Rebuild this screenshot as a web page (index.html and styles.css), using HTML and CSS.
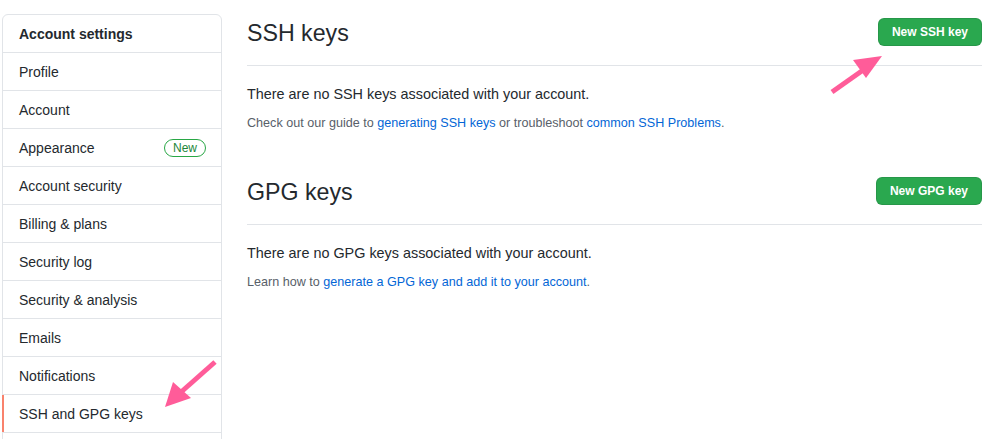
FILE: index.html
```html
<!DOCTYPE html>
<html>
<head>
<meta charset="utf-8">
<link rel="stylesheet" href="styles.css">
</head>
<body>
<div class="page">
  <nav class="menu">
    <div class="menu-heading">Account settings</div>
    <a class="menu-item">Profile</a>
    <a class="menu-item">Account</a>
    <a class="menu-item">Appearance <span class="badge">New</span></a>
    <a class="menu-item">Account security</a>
    <a class="menu-item">Billing &amp; plans</a>
    <a class="menu-item">Security log</a>
    <a class="menu-item">Security &amp; analysis</a>
    <a class="menu-item">Emails</a>
    <a class="menu-item">Notifications</a>
    <a class="menu-item selected">SSH and GPG keys</a>
    <div class="menu-rest"></div>
  </nav>
  <main class="content">
    <section class="block">
      <div class="subhead">
        <h2 class="subhead-title">SSH keys</h2>
        <button class="btn">New SSH key</button>
      </div>
      <p class="lead">There are no SSH keys associated with your account.</p>
      <p class="note">Check out our guide to <a class="link">generating SSH keys</a> or troubleshoot <a class="link">common SSH Problems</a>.</p>
    </section>
    <section class="block second">
      <div class="subhead">
        <h2 class="subhead-title">GPG keys</h2>
        <button class="btn">New GPG key</button>
      </div>
      <p class="lead">There are no GPG keys associated with your account.</p>
      <p class="note">Learn how to <a class="link">generate a GPG key and add it to your account</a>.</p>
    </section>
  </main>
</div>
<svg class="arrow arrow-top" width="60" height="40" viewBox="0 0 60 40">
  <line x1="2" y1="36" x2="36" y2="12" stroke="#ff5c99" stroke-width="5"/>
  <polygon points="52,0 23,4 36,22" fill="#ff5c99"/>
</svg>
<svg class="arrow arrow-bottom" width="60" height="52" viewBox="0 0 60 52">
  <line x1="55" y1="3" x2="20" y2="34" stroke="#ff5c99" stroke-width="5"/>
  <polygon points="5,48 13,23 31,39" fill="#ff5c99"/>
</svg>
</body>
</html>
```
FILE: styles.css
```css
html, body {
  margin: 0;
  padding: 0;
  background: #fff;
}
body {
  font-family: "Liberation Sans", Arial, sans-serif;
  color: #24292e;
  font-size: 14px;
  width: 987px;
  height: 439px;
  overflow: hidden;
  position: relative;
}
.page {
  display: flex;
  padding: 14px 5px 0 2px;
  gap: 25px;
}
.menu {
  width: 218px;
  flex: none;
  border: 1px solid #e1e4e8;
  border-radius: 6px;
  display: flex;
  flex-direction: column;
}
.menu-heading {
  height: 37px;
  padding: 0 16px;
  display: flex;
  align-items: center;
  font-weight: bold;
  border-bottom: 1px solid #e1e4e8;
}
.menu-item {
  height: 37px;
  padding: 0 15px 0 16px;
  display: flex;
  align-items: center;
  justify-content: space-between;
  border-bottom: 1px solid #e1e4e8;
  color: #24292e;
  position: relative;
}
.menu-rest {
  height: 20px;
}
.menu-item.selected::before {
  content: "";
  position: absolute;
  left: -1px;
  top: 0;
  bottom: 0;
  width: 2px;
  background: #f9826c;
}
.badge {
  display: inline-block;
  font-size: 12px;
  font-weight: 500;
  line-height: 16px;
  padding: 0 8px;
  border: 1px solid #28a745;
  border-radius: 2em;
  color: #22863a;
}
.content {
  flex: 1;
}
.block.second {
  margin-top: 41px;
}
.subhead {
  display: flex;
  align-items: flex-start;
  justify-content: space-between;
  height: 51px;
  border-bottom: 1px solid #e1e4e8;
}
.subhead-title {
  margin: 1px 0 0;
  font-size: 23.2px;
  font-weight: normal;
  line-height: 36px;
}
.btn {
  font-family: inherit;
  font-size: 12px;
  font-weight: bold;
  color: #fff;
  background: #2aa84f;
  border: 1px solid rgba(27,31,35,0.12);
  border-radius: 6px;
  height: 28px;
  padding: 0 13px;
  margin-top: 4px;
}
.lead {
  margin: 18px 0 0;
  font-size: 14.4px;
  line-height: 21px;
}
.note {
  margin: 9px 0 0;
  font-size: 12.6px;
  line-height: 18px;
  color: #586069;
}
.link {
  color: #0366d6;
}
.arrow {
  position: absolute;
}
.arrow-top {
  left: 830px;
  top: 56px;
}
.arrow-bottom {
  left: 160px;
  top: 359px;
}
```
